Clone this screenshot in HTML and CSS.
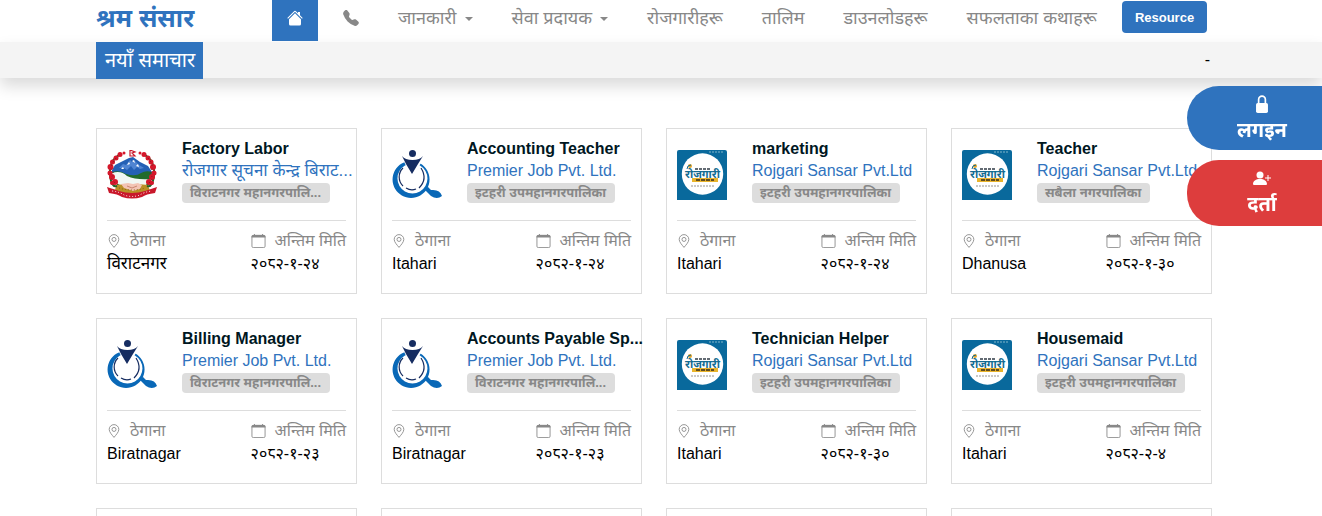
FILE: index.html
```html
<!DOCTYPE html>
<html lang="ne">
<head>
<meta charset="utf-8">
<meta name="viewport" content="width=device-width, initial-scale=1">
<title>श्रम संसार</title>
<link rel="stylesheet" href="styles.css">
</head>
<body>
<svg class="sprite" aria-hidden="true">
  <symbol id="pin" viewBox="0 0 16 16"><g fill="none" stroke="currentColor" stroke-width="1"><path d="M8 15.300C6 12.800 2.500 9.300 2.500 6.200a5.500 5.500 0 0 1 11 0C13.500 9.300 10 12.800 8 15.300z"/><circle cx="8" cy="6.200" r="2.300"/></g></symbol>
  <symbol id="calendar" viewBox="0 0 16 16"><rect x=".5" y="1.500" width="15" height="14" rx="1.500" fill="none" stroke="currentColor"/><path d="M0 4V3a2 2 0 0 1 2-2h1V0h1v1h8V0h1v1h1a2 2 0 0 1 2 2v1z" fill="currentColor"/></symbol>
  <symbol id="emblem" viewBox="0 0 50 50">
    <path d="M5 20 8 15l6-3 8-4 4-1 7 5 8 4 4 6v4H5z" fill="#2460b5"/>
    <path d="m12 18 4-4 3 1 4-5 2 2 2-2 5 5 5 3-4 1-3-2-3 3-3-4-4 4-3-2z" fill="#4f84d2"/>
    <path d="m20 15 2-3 1 2zm9 1 2-2 1 3zM14 19l2-2 1 2zM25 11l2-1 1 3z" fill="#fff"/>
    <path d="M5 22q8-2 14 2 10 3 15-1 5-3 11-1l-3 13-15 2-17-2z" fill="#226b2b"/>
    <path d="M5 23q9-3 15 3 9 4 23 3l-4 6H13L5 31z" fill="#f1f7f3"/>
    <path d="M9 35q16-2 32 0l2 6q-17 7-35 0z" fill="#b99026"/>
    <path d="m14 34 7-1 5 1 5-1 4 2-2 4-7 2-9-3z" fill="#f3c4b4"/>
    <path d="m20 36 5 2 5-2" fill="none" stroke="#c98570"/>
    <path d="M14 4Q2 10 3 24t7 12M36 4q12 6 11 20t-7 12" fill="none" stroke="#276326" stroke-width="2"/>
    <g fill="#d5172b">
      <circle cx="13" cy="4.500" r="2.500"/><circle cx="9" cy="8" r="2.500"/><circle cx="5.500" cy="12" r="2.500"/><circle cx="3.500" cy="17" r="3"/><circle cx="3" cy="23" r="2.500"/><circle cx="5" cy="27" r="3"/><circle cx="8" cy="32" r="3"/><circle cx="5" cy="33" r="2"/>
      <circle cx="37" cy="4.500" r="2.500"/><circle cx="41" cy="8" r="2.500"/><circle cx="44" cy="12" r="2.500"/><circle cx="46" cy="17" r="3"/><circle cx="47" cy="23" r="2.500"/><circle cx="45" cy="27" r="3"/><circle cx="42" cy="32" r="3"/><circle cx="45" cy="33" r="2"/>
      <circle cx="17" cy="3" r="1.500"/><circle cx="33" cy="3" r="1.500"/>
    </g>
    <path d="M9 8 5 14 4 19 7 24 4 28 8 33M41 8l4 6 0 5-2 5 3 4-4 5" fill="none" stroke="#7b1825" stroke-dasharray="1 3"/>
    <path d="M23 0l5 2-3 1 3 3h-5z" fill="#fff" stroke="#c9182b" stroke-width="1.200"/>
    <path d="M0 37q10 3 12 4 13 4 26 0l12-4-2 6q-9 1-13 4-10 3-20 0-4-3-13-4z" fill="#c9182b"/>
    <path d="M5 41q8 1 12 4 8 3 16 0 4-3 12-4" fill="none" stroke="#fff" stroke-dasharray="1 2"/>
    <path d="M12 38q13 4 26 0" fill="none" stroke="#806214" stroke-dasharray="1 2"/>
  </symbol>
  <symbol id="premier" viewBox="0 0 50 50">
    <path fill-rule="evenodd" d="M19 11a18.500 18.500 0 1 0 .1 0zM20.500 13.500a15 15 0 1 1-.1 0z" fill="#0968b7"/>
    <path d="M10 5h22l-3 8-8 13-8-12z" fill="#fff"/>
    <path d="m33 38 3-1 3 3q9-1 11 6-5 4-11 0-2-2-6-6z" fill="#0968b7"/>
    <path d="M11 18A12.500 12.500 0 0 0 11 36m3 2q5 3 10 1m3-1q9-9 2-20" fill="none" stroke="#162d61" stroke-width="1.200"/>
    <circle cx="20.500" cy="3.500" r="3.500" fill="#162d61"/>
    <path d="M10 6q3 4 10.500 4T31 6l-5 8-6 10-6-10z" fill="#162d61"/>
  </symbol>
  <symbol id="rojgari" viewBox="0 0 50 50">
    <path d="M0 50V2q0-2 2-2h46q2 0 2 2v48z" fill="#09699c"/>
    <path d="M32 2h15" stroke="#80b6ca" stroke-dasharray="2 1"/>
    <circle cx="25.500" cy="24" r="20.700" fill="#fff"/>
    <circle cx="13" cy="16" r="2" fill="#e4a62c"/><path d="M10 19q0-4 4-4" fill="none" stroke="#126b91"/>
    <text x="25.500" y="28" text-anchor="middle" class="logo-word">रोजगारी</text>
    <path d="M18 19h16" stroke="#303b46" stroke-width="1.500" stroke-dasharray="3 1"/>
    <path d="M15 28h26v4H15z" fill="#e9b42c"/>
    <path d="M19 30h18" stroke="#604d24" stroke-width="2" stroke-dasharray="4 1"/>
    <path d="M14 36h24" stroke="#777" stroke-width=".8" stroke-dasharray="2 1"/>
  </symbol>
</svg>

<header class="header">
  <a class="brand" href="#">श्रम संसार</a>
  <nav class="nav">
    <a class="home" href="#" aria-label="Home"><svg class="nav-icon" viewBox="0 0 16 16" fill="currentColor"><path d="m8 3.300 6 6V14a1.500 1.500 0 0 1-1.500 1.500h-9A1.500 1.500 0 0 1 2 14V9.300z"/><path d="M7.300 1a1 1 0 0 1 1.400 0L11 3.300V2h2v3.300l2.700 2.700-.7.700-7-7-7 7-.7-.7z"/></svg></a>
    <a class="phone" href="#" aria-label="Phone"><svg class="nav-icon" viewBox="0 0 16 16" fill="currentColor"><path d="M1.900.5a1.700 1.700 0 0 1 2.600.2l1.800 2.300c.3.400.4 1 .3 1.500L6 6.600c0 .2 0 .4.200.6l2.500 2.500c.2.200.4.200.6.200l2.100-.6c.5-.1 1.100 0 1.500.3l2.300 1.800c.8.700.9 1.900.2 2.600l-1 1c-.8.800-1.900 1.100-2.900.700a18 18 0 0 1-6.900-4.300A18 18 0 0 1 .3 4.500C-.1 3.500.2 2.300.9 1.500z"/></svg></a>
    <a class="drop" href="#">जानकारी</a>
    <a class="drop" href="#">सेवा प्रदायक</a>
    <a href="#">रोजगारीहरू</a>
    <a href="#">तालिम</a>
    <a href="#">डाउनलोडहरू</a>
    <a href="#">सफलताका कथाहरू</a>
  </nav>
  <button class="resource" type="button">Resource</button>
</header>
<section class="news"><h2 class="news-title">नयाँ समाचार</h2><span class="news-text">-</span></section>

<main class="jobs">
  <article class="card">
    <div class="job"><svg class="logo"><use href="#emblem"/></svg><div class="info"><h3 class="title">Factory Labor</h3><a class="company nepali" href="#">रोजगार सूचना केन्द्र बिराट...</a><span class="badge">विराटनगर महानगरपालि...</span></div></div>
    <dl class="meta"><div><dt><svg class="icon"><use href="#pin"/></svg>ठेगाना</dt><dd class="nepali">विराटनगर</dd></div><div><dt><svg class="icon icon-date"><use href="#calendar"/></svg>अन्तिम मिति</dt><dd>२०८२-१-२४</dd></div></dl>
  </article>
  <article class="card">
    <div class="job"><svg class="logo"><use href="#premier"/></svg><div class="info"><h3 class="title">Accounting Teacher</h3><a class="company" href="#">Premier Job Pvt. Ltd.</a><span class="badge">इटहरी उपमहानगरपालिका</span></div></div>
    <dl class="meta"><div><dt><svg class="icon"><use href="#pin"/></svg>ठेगाना</dt><dd>Itahari</dd></div><div><dt><svg class="icon icon-date"><use href="#calendar"/></svg>अन्तिम मिति</dt><dd>२०८२-१-२४</dd></div></dl>
  </article>
  <article class="card">
    <div class="job"><svg class="logo"><use href="#rojgari"/></svg><div class="info"><h3 class="title">marketing</h3><a class="company" href="#">Rojgari Sansar Pvt.Ltd</a><span class="badge">इटहरी उपमहानगरपालिका</span></div></div>
    <dl class="meta"><div><dt><svg class="icon"><use href="#pin"/></svg>ठेगाना</dt><dd>Itahari</dd></div><div><dt><svg class="icon icon-date"><use href="#calendar"/></svg>अन्तिम मिति</dt><dd>२०८२-१-२४</dd></div></dl>
  </article>
  <article class="card">
    <div class="job"><svg class="logo"><use href="#rojgari"/></svg><div class="info"><h3 class="title">Teacher</h3><a class="company" href="#">Rojgari Sansar Pvt.Ltd</a><span class="badge">सबैला नगरपालिका</span></div></div>
    <dl class="meta"><div><dt><svg class="icon"><use href="#pin"/></svg>ठेगाना</dt><dd>Dhanusa</dd></div><div><dt><svg class="icon icon-date"><use href="#calendar"/></svg>अन्तिम मिति</dt><dd>२०८२-१-३०</dd></div></dl>
  </article>
  <article class="card">
    <div class="job"><svg class="logo"><use href="#premier"/></svg><div class="info"><h3 class="title">Billing Manager</h3><a class="company" href="#">Premier Job Pvt. Ltd.</a><span class="badge">विराटनगर महानगरपालि...</span></div></div>
    <dl class="meta"><div><dt><svg class="icon"><use href="#pin"/></svg>ठेगाना</dt><dd>Biratnagar</dd></div><div><dt><svg class="icon icon-date"><use href="#calendar"/></svg>अन्तिम मिति</dt><dd>२०८२-१-२३</dd></div></dl>
  </article>
  <article class="card">
    <div class="job"><svg class="logo"><use href="#premier"/></svg><div class="info"><h3 class="title">Accounts Payable Sp...</h3><a class="company" href="#">Premier Job Pvt. Ltd.</a><span class="badge">विराटनगर महानगरपालि...</span></div></div>
    <dl class="meta"><div><dt><svg class="icon"><use href="#pin"/></svg>ठेगाना</dt><dd>Biratnagar</dd></div><div><dt><svg class="icon icon-date"><use href="#calendar"/></svg>अन्तिम मिति</dt><dd>२०८२-१-२३</dd></div></dl>
  </article>
  <article class="card">
    <div class="job"><svg class="logo"><use href="#rojgari"/></svg><div class="info"><h3 class="title">Technician Helper</h3><a class="company" href="#">Rojgari Sansar Pvt.Ltd</a><span class="badge">इटहरी उपमहानगरपालिका</span></div></div>
    <dl class="meta"><div><dt><svg class="icon"><use href="#pin"/></svg>ठेगाना</dt><dd>Itahari</dd></div><div><dt><svg class="icon icon-date"><use href="#calendar"/></svg>अन्तिम मिति</dt><dd>२०८२-१-३०</dd></div></dl>
  </article>
  <article class="card">
    <div class="job"><svg class="logo"><use href="#rojgari"/></svg><div class="info"><h3 class="title">Housemaid</h3><a class="company" href="#">Rojgari Sansar Pvt.Ltd</a><span class="badge">इटहरी उपमहानगरपालिका</span></div></div>
    <dl class="meta"><div><dt><svg class="icon"><use href="#pin"/></svg>ठेगाना</dt><dd>Itahari</dd></div><div><dt><svg class="icon icon-date"><use href="#calendar"/></svg>अन्तिम मिति</dt><dd>२०८२-२-४</dd></div></dl>
  </article>
  <article class="card"></article>
  <article class="card"></article>
  <article class="card"></article>
  <article class="card"></article>
</main>

<aside class="side">
  <a class="pill" href="#"><svg class="pill-icon" viewBox="0 0 16 16"><path d="M5 8V4a3 3 0 0 1 6 0v4" fill="none" stroke="currentColor" stroke-width="1.500"/><rect x="2.700" y="7" width="10.600" height="9" rx="1.500" fill="currentColor"/></svg>लगइन</a>
  <a class="pill pill-red" href="#"><svg class="pill-icon" viewBox="0 0 18 16" fill="currentColor"><circle cx="7" cy="5" r="3.500"/><path d="M0 14c0-3 3-5 7-5s7 2 7 5q0 1-1 1H1q-1 0-1-1zM14.500 5h1v2.500H18v1h-2.500V11h-1V8.500H12v-1h2.500z"/></svg>दर्ता</a>
</aside>
</body>
</html>
```
FILE: styles.css
```css
* { box-sizing: border-box; }
body {
  margin: 0;
  background: #fff;
  color: #000;
  font: 16px/24px "Liberation Sans", "Noto Sans", sans-serif;
}
a { color: inherit; text-decoration: none; }
h2, h3, dl, dd { margin: 0; }
.sprite { position: absolute; width: 0; height: 0; }
.logo-word { font: bold 11px "Noto Sans", sans-serif; fill: #126b91; }

.header {
  display: flex;
  align-items: flex-start;
  height: 42px;
  padding: 0 115px 0 96px;
}
.brand { width: 176px; color: #2f73be; font-size: 25px; line-height: 36px; font-weight: 700; white-space: nowrap; }
.nav { display: flex; gap: 39px; color: #888; font-size: 18px; line-height: 36px; white-space: nowrap; }
.home { display: flex; justify-content: center; width: 46px; height: 41px; margin-right: -14px; padding-top: 10px; background: #2f73be; color: #fff; }
.phone { padding-top: 10px; }
.nav-icon { display: block; width: 16px; height: 16px; }
.drop::after { content: ""; display: inline-block; margin-left: 8px; border: 4px solid transparent; border-top-color: currentColor; border-bottom: 0; vertical-align: 3px; }
.resource { width: 85px; height: 32px; margin: 1px 0 0 auto; padding: 0; border: 0; border-radius: 4px; background: #2f73be; color: #fff; font: bold 13px "Liberation Sans", sans-serif; }

.news { display: flex; justify-content: space-between; height: 36px; padding: 0 112px 0 96px; background: #f4f4f4; box-shadow: 0 8px 16px rgba(0, 0, 0, .15); }
.news-title { height: 37px; padding: 0 8px 0 9px; background: #2f73be; color: #fff; font-size: 20px; line-height: 36px; font-weight: 400; }
.news-text { line-height: 36px; }

.jobs { display: grid; grid-template-columns: repeat(4, minmax(0, 1fr)); gap: 24px; padding: 50px 110px 24px 96px; }
.card { min-height: 166px; padding: 8px 10px; border: 1px solid #ddd; white-space: nowrap; }
.job { display: flex; gap: 25px; height: 84px; border-bottom: 1px solid #ddd; }
.logo { flex: none; width: 50px; height: 50px; margin-top: 13px; }
.info { display: flex; flex-direction: column; align-items: flex-start; width: 0; }
.title { color: #00171f; font-size: 16px; line-height: 24px; font-weight: 700; }
.company { height: 20px; color: #2f73be; line-height: 20px; }
.nepali { font-size: 17px; }
.badge { height: 20px; margin-top: 2px; padding: 0 9px 0 8px; border-radius: 4px; background: #ddd; color: #888; font-size: 13px; line-height: 20px; font-weight: 700; }
.meta { display: flex; justify-content: space-between; padding-top: 8px; line-height: 23px; }
.meta dt { display: flex; align-items: center; gap: 9px; color: #888; }
.icon { width: 14px; height: 14px; }
.icon-date { width: 15px; }

.side { position: fixed; top: 86px; right: 0; display: flex; flex-direction: column; gap: 10px; width: 135px; }
.pill { display: flex; flex-direction: column; align-items: center; height: 64px; padding: 9px 0 0 15px; border-radius: 32px 0 0 32px; background: #2f73be; color: #fff; font-size: 20px; line-height: 34px; font-weight: 700; }
.pill-red { height: 66px; background: #dd3d3d; }
.pill-icon { width: 18px; height: 18px; flex: none; }
```
